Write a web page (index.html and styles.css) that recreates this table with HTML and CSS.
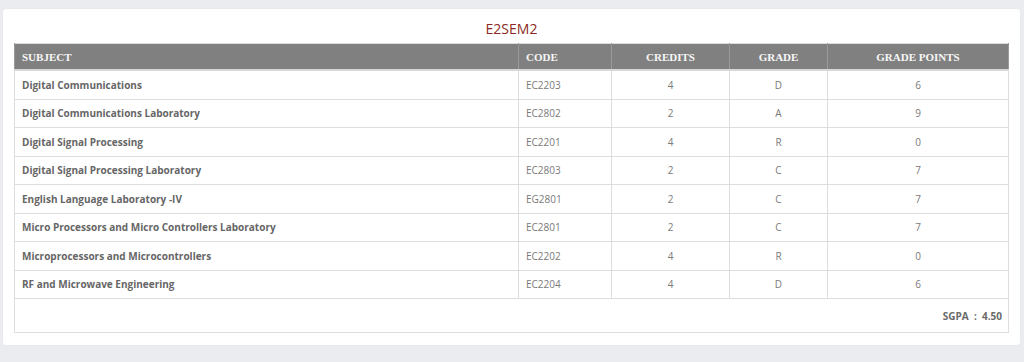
FILE: index.html
```html
<!DOCTYPE html>
<html>
<head>
<meta charset="utf-8">
<link rel="stylesheet" href="styles.css">
</head>
<body>
<div class="card">
  <h2 class="title">E2SEM2</h2>
  <table class="results">
    <thead>
      <tr>
        <th class="c-subject">SUBJECT</th>
        <th class="c-code">CODE</th>
        <th class="c-credits">CREDITS</th>
        <th class="c-grade">GRADE</th>
        <th class="c-points">GRADE POINTS</th>
      </tr>
    </thead>
    <tbody>
      <tr><td class="subj">Digital Communications</td><td>EC2203</td><td class="ctr">4</td><td class="ctr">D</td><td class="ctr">6</td></tr>
      <tr><td class="subj">Digital Communications Laboratory</td><td>EC2802</td><td class="ctr">2</td><td class="ctr">A</td><td class="ctr">9</td></tr>
      <tr><td class="subj">Digital Signal Processing</td><td>EC2201</td><td class="ctr">4</td><td class="ctr">R</td><td class="ctr">0</td></tr>
      <tr><td class="subj">Digital Signal Processing Laboratory</td><td>EC2803</td><td class="ctr">2</td><td class="ctr">C</td><td class="ctr">7</td></tr>
      <tr><td class="subj">English Language Laboratory -IV</td><td>EG2801</td><td class="ctr">2</td><td class="ctr">C</td><td class="ctr">7</td></tr>
      <tr><td class="subj">Micro Processors and Micro Controllers Laboratory</td><td>EC2801</td><td class="ctr">2</td><td class="ctr">C</td><td class="ctr">7</td></tr>
      <tr><td class="subj">Microprocessors and Microcontrollers</td><td>EC2202</td><td class="ctr">4</td><td class="ctr">R</td><td class="ctr">0</td></tr>
      <tr><td class="subj">RF and Microwave Engineering</td><td>EC2204</td><td class="ctr">4</td><td class="ctr">D</td><td class="ctr">6</td></tr>
      <tr class="sgpa-row"><td colspan="5" class="sgpa">SGPA &nbsp;:&nbsp; 4.50</td></tr>
    </tbody>
  </table>
</div>
</body>
</html>
```
FILE: styles.css
```css
html, body {
  margin: 0;
  padding: 0;
  background: #ebecf0;
}
body {
  padding: 9px 4px 16px 3px;
  font-family: "Open Sans", "Liberation Sans", sans-serif;
}
.card {
  background: #fff;
  border-radius: 3px;
  padding: 10px 11px 12px 11px;
  box-shadow: 0 0 1px rgba(0,0,0,0.08);
}
.title {
  margin: 0;
  height: 24px;
  line-height: 20px;
  text-align: center;
  font-weight: 400;
  font-size: 14px;
  color: #8b2a23;
}
.results {
  width: 100%;
  border-collapse: collapse;
  border: 1px solid #dcdcdc;
}
.results th {
  background: #808080;
  color: #f7f7f7;
  font-family: "Liberation Serif", "Times New Roman", serif;
  font-weight: 700;
  font-size: 11px;
  height: 25px;
  padding: 0 7px;
  text-align: center;
  border: 1px solid #9a9a9a;
  border-bottom: 2px solid #d8d8d8;
  border-top: none;
}
.results th.c-subject,
.results th.c-code { text-align: left; }
.c-subject { width: 489px; }
.c-code { width: 78px; }
.c-credits { width: 103px; }
.c-grade { width: 83px; }
.results td {
  height: 27.5px;
  padding: 0 7px;
  font-size: 10px;
  color: #7a7a7a;
  border: 1px solid #dedede;
  border-top: 1px solid #e0e0e0;
}
.results td.subj {
  font-weight: 700;
  color: #666;
}
.results td.ctr { text-align: center; }
.sgpa-row td.sgpa {
  height: 33px;
  text-align: right;
  font-weight: 700;
  color: #6a6a6a;
  padding-right: 6px;
}
```
